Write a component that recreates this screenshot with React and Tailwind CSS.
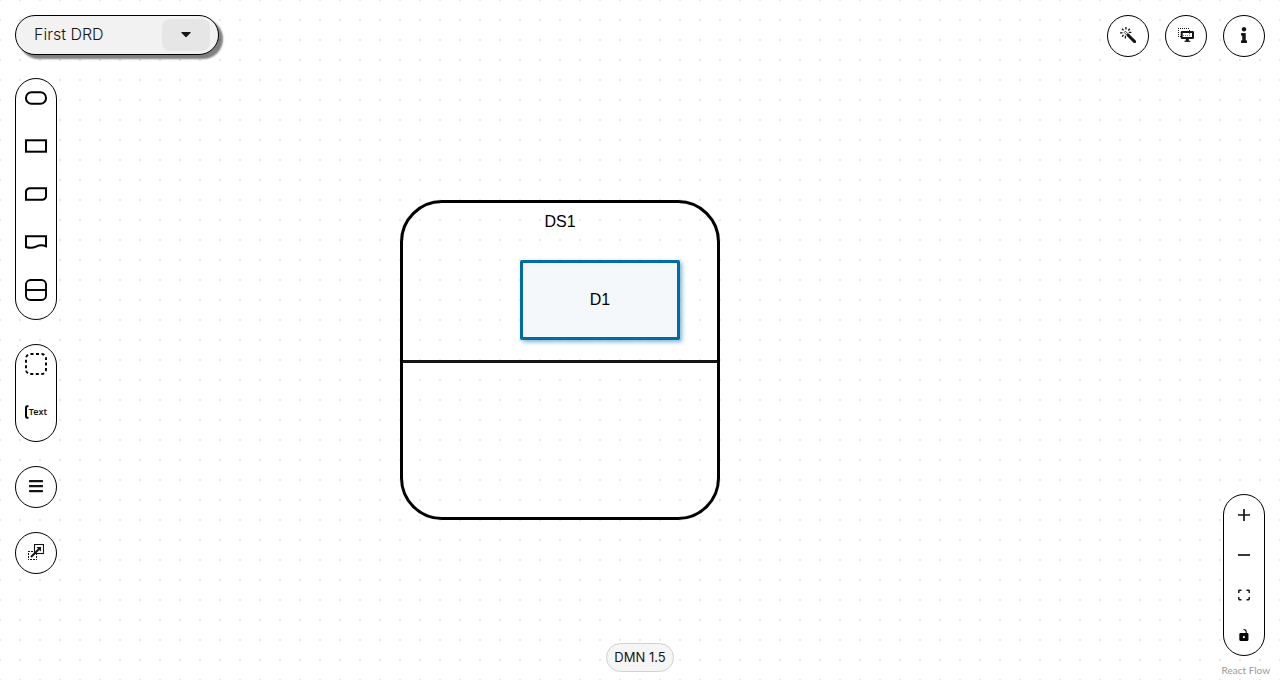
import React from "react";
import { FaBars, FaInfo, FaCaretDown } from "react-icons/fa";

const circle =
  "flex size-[42px] items-center justify-center rounded-full border border-black bg-white pb-0.5 text-[#151515]";
const group = "flex w-[42px] flex-col rounded-full border border-black bg-white";

const nodeTypes = [
  { label: "Input data", shape: <rect x="1" y="1.3" width="20" height="11.4" rx="5.5" /> },
  { label: "Decision", shape: <rect x="1" y="1.3" width="20" height="11.4" /> },
  {
    label: "Business knowledge model",
    shape: <path d="M1 4.2 Q1.6 1.8 4.4 1.3 H21 V9.8 Q20.4 12.2 17.6 12.7 H1 Z" />,
  },
  {
    label: "Knowledge source",
    shape: <path d="M1 1.3 H21 V11.3 C17 9.6 13.5 10.4 11 11.6 C8 13 4 13 1 12 Z" />,
  },
];

function PaletteItem({ label, children }) {
  return (
    <button type="button" aria-label={label} className="flex h-12 items-center justify-center pb-2.5">
      {children}
    </button>
  );
}

function ControlItem({ label, children }) {
  return (
    <button type="button" aria-label={label} className="flex h-10 items-center justify-center">
      {children}
    </button>
  );
}

function WandIcon() {
  return (
    <svg width="16" height="16" viewBox="0 0 16 16" fill="none" stroke="currentColor">
      <path d="M8.2 8.2 L14.6 14.6" strokeWidth="3" strokeLinecap="round" />
      <path d="M4.2 5.4 L5.4 4.2 L9 7.8 L7.8 9 Z" strokeWidth="0.8" />
      <path
        d="M5.9 0 V2.6 M2 1.8 L3.6 3.4 M9.9 1.8 L8.2 3.5 M0 5.8 H2.6 M8.8 5.4 H11.4 M2 9.6 L3.6 8 M5.4 8.8 V11.4"
        strokeWidth="1.3"
      />
    </svg>
  );
}

function OverlaysIcon() {
  return (
    <svg width="16" height="14" viewBox="0 0 16 14" fill="none" stroke="currentColor">
      <path d="M0 0.5 H12 M0.5 2 V9 M0 8.5 H3 M11.5 2 V3" strokeDasharray="1 1" />
      <rect x="3.7" y="4" width="11.3" height="6" rx="0.3" strokeWidth="2" />
      <path d="M5 7.5 H11 M11.5 5 V8" strokeDasharray="1 1" strokeWidth="0.6" />
      <path d="M9.3 11 V13" strokeWidth="3" />
      <path d="M6.5 13.3 H12.3" strokeWidth="1.2" />
    </svg>
  );
}

function ExternalNodesIcon() {
  return (
    <svg width="16" height="16" viewBox="0 0 16 16" fill="none" stroke="currentColor">
      <rect x="6.5" y="0.5" width="9" height="9" strokeWidth="1.1" />
      <path
        d="M0 7.5 H6 M0.5 9 V16 M2 15.5 H9 M8.5 14 V10"
        strokeWidth="1"
        strokeDasharray="2 1"
      />
      <path d="M3 13 L11 5" strokeWidth="2" />
      <path d="M8.4 3 H13 V7.6 Z" fill="currentColor" stroke="none" />
    </svg>
  );
}

function Diagram() {
  return (
    <div className="absolute inset-0">
      <div className="absolute top-[200px] left-[400px] flex size-[320px] flex-col rounded-[42px] border-3 border-black bg-white/15">
        <div className="h-[160px] border-b-3 border-[#151515] pt-[7px] text-center text-base text-black">
          DS1
        </div>
      </div>
      <div className="absolute top-[260px] left-[520px] flex h-20 w-40 items-center justify-center rounded-[2px] border-3 border-[#006ba4] bg-[#f4f8fb] text-base text-black shadow-[2px_2px_4px_rgba(0,107,164,0.5)]">
        D1
      </div>
    </div>
  );
}

export default function App() {
  return (
    <main className="relative flex min-h-screen bg-white bg-[conic-gradient(at_2px_2px,transparent_75%,#e8e8e8_0)] bg-[size:20px_20px] bg-[position:-1px_-1px] font-['Liberation_Sans',sans-serif]">
      <Diagram />

      <div className="relative flex flex-1 justify-between pt-[15px] pr-[15px] pl-[15px] font-['Inter',sans-serif]">
        <div className="flex flex-1 basis-0 flex-col items-start gap-[23px]">
          <div className="flex h-10 w-[204px] items-center justify-between rounded-full border border-black bg-[#f2f2f2] pr-2 pl-[18px] shadow-[4px_4px_2px_rgba(0,0,0,0.5)]">
            <span className="pb-0.5 text-base font-light text-[#151515]">First DRD</span>
            <button
              type="button"
              aria-label="Select DRD"
              className="flex h-8 w-12 items-center justify-center rounded-lg bg-[#e6e6e6] pb-0.5 text-[#151515]"
            >
              <FaCaretDown size={16} />
            </button>
          </div>

          <div className="flex flex-col gap-6">
            <div className={group}>
              {nodeTypes.map(({ label, shape }) => (
                <PaletteItem key={label} label={label}>
                  <svg width="22" height="14" viewBox="0 0 22 14" fill="none" stroke="#000" strokeWidth="2">
                    {shape}
                  </svg>
                </PaletteItem>
              ))}
              <PaletteItem label="Decision service">
                <svg width="22" height="22" viewBox="0 0 22 22" fill="none" stroke="#000" strokeWidth="1.9">
                  <rect x="1" y="1" width="20" height="20" rx="4.5" />
                  <path d="M1 11 H21" />
                </svg>
              </PaletteItem>
            </div>

            <div className={group}>
              <PaletteItem label="Group">
                <svg width="22" height="22" viewBox="0 0 22 22" fill="none" stroke="#000" strokeWidth="1.9">
                  <rect x="1" y="1" width="20" height="20" rx="4.5" strokeDasharray="3 2.5" />
                </svg>
              </PaletteItem>
              <PaletteItem label="Text annotation">
                <svg width="4" height="14" viewBox="0 0 4 14" fill="none" stroke="#000" strokeWidth="2">
                  <path d="M3.5 1.2 H2.2 Q1 1.2 1 2.5 V11.5 Q1 12.8 2.2 12.8 H3.5" />
                </svg>
                <span className="font-['Noto_Sans',sans-serif] text-[9px] font-semibold text-[#151515]">
                  Text
                </span>
              </PaletteItem>
            </div>

            <button type="button" aria-label="Nodes menu" className={circle}>
              <FaBars size={16} />
            </button>
            <button type="button" aria-label="External nodes" className={circle}>
              <ExternalNodesIcon />
            </button>
          </div>
        </div>

        <div className="mb-2 self-end rounded-full border border-[#d2d2d2] bg-[#f5f5f5] px-[7px] pt-[3px] pb-1 text-[13px] leading-5 text-[#151515]">
          DMN 1.5
        </div>

        <div className="flex flex-1 basis-0 flex-col items-end justify-between">
          <div className="flex gap-4">
            <button type="button" aria-label="Autolayout" className={circle}>
              <WandIcon />
            </button>
            <button type="button" aria-label="Overlays" className={circle}>
              <OverlaysIcon />
            </button>
            <button type="button" aria-label="Properties" className={circle}>
              <FaInfo size={16} />
            </button>
          </div>

          <div className="flex flex-col items-end gap-2">
            <div className={group}>
              <ControlItem label="Zoom in">
                <svg width="12" height="12" viewBox="0 0 12 12" stroke="#151515" strokeWidth="1.7">
                  <path d="M6 0 V12 M0 6 H12" />
                </svg>
              </ControlItem>
              <ControlItem label="Zoom out">
                <svg width="12" height="12" viewBox="0 0 12 12" stroke="#151515" strokeWidth="1.7">
                  <path d="M0 6 H12" />
                </svg>
              </ControlItem>
              <ControlItem label="Fit view">
                <svg width="12" height="12" viewBox="0 0 12 12" fill="none" stroke="#151515" strokeWidth="1.5">
                  <path d="M0.8 4 V1.9 Q0.8 1.3 1.4 1.3 H3.5 M8.5 1.3 H10.6 Q11.2 1.3 11.2 1.9 V4 M11.2 8 V10.1 Q11.2 10.7 10.6 10.7 H8.5 M3.5 10.7 H1.4 Q0.8 10.7 0.8 10.1 V8" />
                </svg>
              </ControlItem>
              <ControlItem label="Toggle interactivity">
                <svg width="10" height="12" viewBox="0 0 25 32" fill="#000">
                  <path d="M21.333 10.667H19.81V7.619C19.81 3.429 16.38 0 12.19 0c-4.114 1.828-1.37 2.133.305 2.438 1.676.305 4.42 2.59 4.42 5.181v3.048H3.047A3.056 3.056 0 0 0 0 13.714v15.238A3.056 3.056 0 0 0 3.048 32h18.285a3.056 3.056 0 0 0 3.048-3.048V13.714a3.056 3.056 0 0 0-3.048-3.047zM12.19 24.533a3.056 3.056 0 0 1-3.047-3.047 3.056 3.056 0 0 1 3.047-3.048 3.056 3.056 0 0 1 3.048 3.048 3.056 3.056 0 0 1-3.048 3.047z" />
                </svg>
              </ControlItem>
            </div>
            <a
              href="https://reactflow.dev"
              className="-mr-[5px] mb-[3px] font-['Lato',sans-serif] text-[10px] leading-[13px] text-[#999999]"
            >
              React Flow
            </a>
          </div>
        </div>
      </div>
    </main>
  );
}
